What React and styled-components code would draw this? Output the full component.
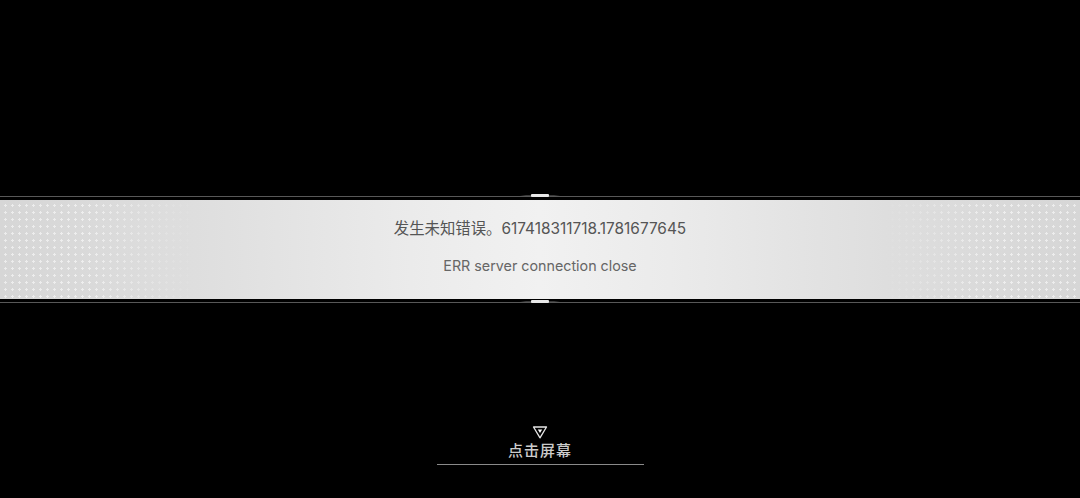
import React from "react";
import styled, { createGlobalStyle } from "styled-components";

const GlobalStyle = createGlobalStyle`
  html, body {
    margin: 0;
    padding: 0;
    background: #000;
  }
  body {
    font-family: Inter, "Noto Sans CJK SC", sans-serif;
  }
`;

const Page = styled.div`
  width: 100%;
  height: 100vh;
  background: #000;
  display: flex;
  flex-direction: column;
  overflow: hidden;
`;

const Filler = styled.div`
  flex: 1;
  display: flex;
  flex-direction: column;
  justify-content: ${(p) => (p.$bottom ? "flex-end" : "flex-start")};
  align-items: center;
`;

const Dialog = styled.div`
  display: flex;
  flex-direction: column;
  gap: 3px;
`;

const Rule = styled.div`
  position: relative;
  height: 1px;
  background: #585858;
`;

const Marker = styled.div`
  position: absolute;
  left: 50%;
  top: -2px;
  width: 40px;
  height: 4px;
  transform: translateX(-50%);
  display: flex;
  align-items: center;
  justify-content: center;
  background: linear-gradient(
    90deg,
    transparent 0%,
    #3a3a3a 15%,
    #3a3a3a 85%,
    transparent 100%
  );
  background-size: 100% 1px;
  background-repeat: no-repeat;
  background-position: center;

  &::after {
    content: "";
    width: 18px;
    height: 3px;
    background: #e8e8e8;
    border-radius: 1px;
  }
`;

const Band = styled.div`
  position: relative;
  height: 99px;
  background: linear-gradient(
    90deg,
    #d6d6d6 0%,
    #dedede 18%,
    #ebebeb 38%,
    #f1f1f1 50%,
    #ebebeb 62%,
    #dedede 82%,
    #d6d6d6 100%
  );
  display: flex;
  flex-direction: column;
  align-items: center;
  justify-content: center;
  gap: 22px;
  overflow: hidden;

  &::before,
  &::after {
    content: "";
    position: absolute;
    top: 0;
    bottom: 0;
    width: 200px;
    background-image: radial-gradient(
      circle,
      rgba(255, 255, 255, 0.55) 1px,
      transparent 1.4px
    );
    background-size: 7px 7px;
    background-position: 2px 2px;
    pointer-events: none;
  }
  &::before {
    left: 0;
    -webkit-mask-image: linear-gradient(90deg, #000 45%, transparent 100%);
    mask-image: linear-gradient(90deg, #000 45%, transparent 100%);
  }
  &::after {
    right: 0;
    -webkit-mask-image: linear-gradient(270deg, #000 45%, transparent 100%);
    mask-image: linear-gradient(270deg, #000 45%, transparent 100%);
  }
`;

const Message = styled.div`
  position: relative;
  z-index: 1;
  color: ${(p) => p.$color};
  font-size: ${(p) => p.$size}px;
  line-height: 1;
  margin-top: ${(p) => p.$shift || 0}px;
`;

const Prompt = styled.div`
  display: flex;
  flex-direction: column;
  align-items: center;
  padding-bottom: 33px;
`;

const Arrow = styled.svg`
  display: block;
  width: 16px;
  height: 13px;
  margin-bottom: 4px;
`;

const PromptText = styled.div`
  color: #cccccc;
  font-size: 15px;
  font-weight: 500;
  line-height: 1;
  letter-spacing: 1px;
  padding-bottom: 6px;
  width: 207px;
  text-align: center;
  border-bottom: 1px solid #8a8a8a;
`;

export default function App() {
  return (
    <>
      <GlobalStyle />
      <Page>
        <Filler />
        <Dialog>
          <Rule>
            <Marker />
          </Rule>
          <Band>
            <Message $color="#555555" $size={15.4} $shift={-4}>
              发生未知错误。617418311718.1781677645
            </Message>
            <Message $color="#666666" $size={14.3}>
              ERR server connection close
            </Message>
          </Band>
          <Rule>
            <Marker />
          </Rule>
        </Dialog>
        <Filler $bottom>
          <Prompt>
            <Arrow viewBox="0 0 16 13">
              <path
                d="M1.5 1 H14.5 L8 11.8 Z"
                fill="none"
                stroke="#e6e6e6"
                strokeWidth="1.3"
                strokeLinejoin="round"
              />
              <path d="M5.8 3.4 H10.2 L8 7.1 Z" fill="#ffffff" />
            </Arrow>
            <PromptText>点击屏幕</PromptText>
          </Prompt>
        </Filler>
      </Page>
    </>
  );
}
